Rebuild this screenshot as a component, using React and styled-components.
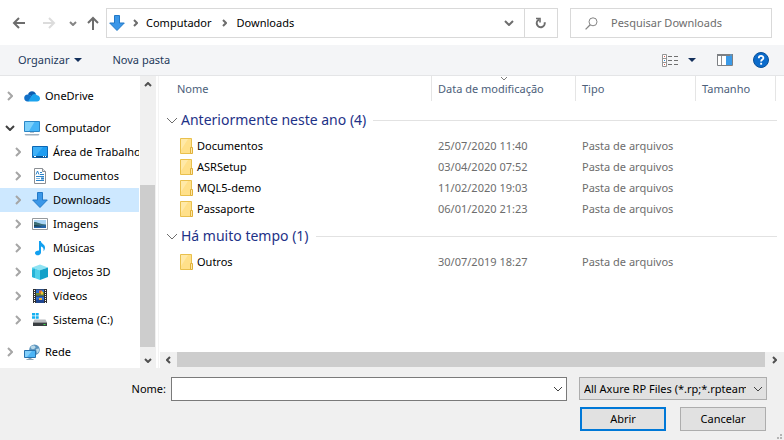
import React from "react";
import styled, { createGlobalStyle, css } from "styled-components";

const GlobalStyle = createGlobalStyle`
  *, *::before, *::after { box-sizing: border-box; }
  body {
    margin: 0;
    background: #fff;
    color: #000;
    font-family: "Noto Sans", "Open Sans", sans-serif;
    font-size: 11px;
    line-height: 16px;
  }
  button, input, select { font: inherit; color: inherit; margin: 0; }
  svg { display: block; flex: none; }
`;

const Dialog = styled.main`
  display: flex;
  flex-direction: column;
  min-height: 100vh;
`;

/* ---------- navigation bar ---------- */

const NavBar = styled.header`
  display: flex;
  align-items: center;
  gap: 12px;
  padding: 8px 12px 7px 11px;
`;

const NavButtons = styled.nav`
  display: flex;
  align-items: center;
  margin-right: -7px;
`;

const IconButton = styled.button`
  display: flex;
  align-items: center;
  justify-content: center;
  flex: none;
  width: ${(p) => p.$width || 16}px;
  height: 16px;
  padding: 0;
  border: 0;
  background: none;
  margin-right: ${(p) => p.$after || 0}px;
`;

const AddressBar = styled.div`
  display: flex;
  align-items: stretch;
  flex: 1;
  min-width: 0;
  height: 30px;
  border: 1px solid #d9d9d9;
`;

const Crumbs = styled.div`
  display: flex;
  align-items: center;
  flex: 1;
  min-width: 0;
  padding-left: 2px;
`;

const Crumb = styled.a`
  color: #000;
  text-decoration: none;
  white-space: nowrap;
`;

const CrumbArrow = styled.span`
  display: flex;
  justify-content: center;
  width: ${(p) => p.$width}px;
`;

const AddressAction = styled.button`
  display: flex;
  align-items: center;
  justify-content: center;
  flex: none;
  width: ${(p) => p.$width}px;
  padding: 0;
  border: 0;
  border-left: ${(p) => (p.$divided ? "1px solid #d9d9d9" : "0")};
  background: none;
`;

const SearchBox = styled.label`
  display: flex;
  align-items: center;
  flex: none;
  width: 202px;
  gap: 13px;
  height: 30px;
  padding: 0 8px 0 14px;
  border: 1px solid #d9d9d9;
`;

const SearchInput = styled.input`
  flex: 1;
  min-width: 0;
  padding: 0;
  border: 0;
  outline: 0;
  background: none;
  &::placeholder { color: #6d6d6d; opacity: 1; }
`;

/* ---------- command bar ---------- */

const CommandBar = styled.div`
  display: flex;
  align-items: center;
  height: 31px;
  padding: 0 15px 0 18px;
  border-bottom: 1px solid #e4e5e7;
  background: #f4f5f7;
`;

const Command = styled.button`
  display: flex;
  align-items: center;
  gap: 5px;
  margin-right: ${(p) => p.$after || 0}px;
  padding: 0;
  border: 0;
  background: none;
  color: #1e395b;
  white-space: nowrap;
`;

const Spacer = styled.div`
  flex: 1;
`;

/* ---------- body ---------- */

const Body = styled.div`
  display: flex;
  flex: 1;
`;

const Sidebar = styled.aside`
  display: flex;
  flex: none;
  width: 159px;
  padding-right: 2px;
  border-right: 1px solid #f3f3f3;
`;

const Tree = styled.ul`
  flex: 1;
  min-width: 0;
  margin: 0;
  padding: 8px 1px 4px 0;
  list-style: none;
`;

const TreeItem = styled.li`
  display: flex;
  align-items: center;
  height: 24px;
  margin-top: ${(p) => (p.$spaced ? 8 : 0)}px;
  padding-left: ${(p) => (p.$nested ? 8 : 0)}px;
  background: ${(p) => (p.$selected ? "#cde8ff" : "transparent")};
  overflow: hidden;
`;

const TreeToggle = styled.button`
  display: flex;
  align-items: center;
  justify-content: center;
  flex: none;
  width: 20px;
  height: 20px;
  margin-right: 4px;
  padding: 0;
  border: 0;
  background: none;
`;

const TreeLabel = styled.a`
  margin-left: 5px;
  color: #000;
  text-decoration: none;
  white-space: nowrap;
`;

const VerticalScroll = styled.div`
  display: flex;
  flex-direction: column;
  align-items: center;
  flex: none;
  width: 16px;
  background: #f0f0f0;
`;

const VerticalTrack = styled.div`
  flex: 1;
  display: flex;
  width: 100%;
  padding: 93px 1px 5px 0;
`;

const HorizontalScroll = styled.div`
  display: flex;
  align-items: center;
  height: 16px;
  padding-bottom: 1px;
  margin-left: 1px;
  background: #f0f0f0;
`;

const Thumb = styled.div`
  flex: 1;
  align-self: stretch;
  background: #cdcdcd;
`;

const Content = styled.section`
  display: flex;
  flex-direction: column;
  justify-content: space-between;
  flex: 1;
  min-width: 0;
`;

const FileTable = styled.table`
  width: 100%;
  table-layout: fixed;
  border-collapse: collapse;
`;

const Column = styled.col`
  width: ${(p) => (p.$width ? `${p.$width}px` : "auto")};
`;

const HeadCell = styled.th`
  height: 28px;
  padding: 0;
  vertical-align: top;
  font-weight: 400;
  text-align: left;
`;

const HeadLabel = styled.div`
  position: relative;
  display: flex;
  align-items: center;
  height: 25px;
  padding-left: ${(p) => (p.$first ? 18 : 6)}px;
  border-left: ${(p) => (p.$first ? "0" : "1px solid #e5e5e5")};
  color: #4c607a;
  white-space: nowrap;
`;

const SortMark = styled.span`
  position: absolute;
  top: 0;
  left: 50%;
  transform: translateX(-50%);
`;

const GroupCell = styled.th`
  height: 32px;
  padding: 0 7px;
  font-weight: 400;
`;

const GroupTitle = styled.div`
  display: flex;
  align-items: center;
  gap: 3px;
  color: #1e3287;
  font-size: 14px;
  line-height: 20px;
  white-space: nowrap;
  &::after {
    content: "";
    flex: 1;
    height: 1px;
    margin-left: 4px;
    background: #e2e2e2;
  }
`;

const Cell = styled.td`
  height: 21px;
  padding: 0 0 2px 7px;
  color: #6d6d6d;
  white-space: nowrap;
`;

const NameCell = styled(Cell)`
  padding-left: 21px;
  color: #000;
`;

const FileName = styled.div`
  display: flex;
  align-items: center;
  gap: 4px;
`;

/* ---------- footer ---------- */

const Footer = styled.form`
  position: relative;
  display: flex;
  flex-direction: column;
  gap: 6px;
  padding: 9px 17px;
  background: #f0f0f0;
`;

const FieldRow = styled.div`
  display: flex;
  align-items: center;
`;

const FieldLabel = styled.label`
  flex: 0 0 154px;
  padding-right: 5px;
  text-align: right;
`;

const ComboBox = styled.div`
  display: flex;
  flex: 1;
  min-width: 0;
  height: 24px;
  margin-right: 12px;
  border: 1px solid #7a7a7a;
  background: #fff;
`;

const NameInput = styled.input`
  flex: 1;
  min-width: 0;
  padding: 0 4px;
  border: 0;
  outline: 0;
  background: none;
`;

const ComboArrow = styled.button`
  display: flex;
  align-items: center;
  justify-content: center;
  width: 17px;
  padding: 0;
  border: 0;
  background: none;
`;

const FilterBox = styled.div`
  display: grid;
  flex: 0 0 188px;
  align-items: center;
  height: 24px;
  padding-bottom: 1px;
  & > * { grid-area: 1 / 1; }
  svg { justify-self: end; margin-right: 4px; pointer-events: none; }
`;

const FilterSelect = styled.select`
  appearance: none;
  width: 100%;
  height: 23px;
  padding: 0 20px 0 4px;
  border: 1px solid #adadad;
  border-radius: 0;
  background: #e1e1e1;
  overflow: hidden;
  text-overflow: clip;
`;

const ButtonRow = styled.div`
  display: flex;
  justify-content: flex-end;
  gap: 14px;
  padding-right: 1px;
`;

const DialogButton = styled.button`
  width: 86px;
  height: 24px;
  padding: 0;
  border: 1px solid #adadad;
  background: #e1e1e1;
  ${(p) =>
    p.$primary &&
    css`
      border: 2px solid #0078d7;
    `}
`;

const ResizeGrip = styled.span`
  position: absolute;
  right: 2px;
  bottom: 1px;
`;

/* ---------- icons ---------- */

const Chevron = ({ dir = "down", w = 8, h = 5, color = "#6d6d6d", stroke = 2 }) => {
  const i = 1;
  const d =
    dir === "down"
      ? `M${i} ${i}L${w / 2} ${h - i}L${w - i} ${i}`
      : dir === "up"
      ? `M${i} ${h - i}L${w / 2} ${i}L${w - i} ${h - i}`
      : dir === "right"
      ? `M${i} ${i}L${w - i} ${h / 2}L${i} ${h - i}`
      : `M${w - i} ${i}L${i} ${h / 2}L${w - i} ${h - i}`;
  return (
    <svg width={w} height={h} viewBox={`0 0 ${w} ${h}`} fill="none" stroke={color} strokeWidth={stroke} aria-hidden="true">
      <path d={d} />
    </svg>
  );
};

const ArrowLine = ({ d, color }) => (
  <svg width="16" height="16" viewBox="0 0 16 16" fill="none" stroke={color} strokeWidth="2" aria-hidden="true">
    <path d={d} />
  </svg>
);

const Triangle = () => (
  <svg width="8" height="4" viewBox="0 0 8 4" aria-hidden="true">
    <path d="M0 0h8L4 4z" fill="#14305c" />
  </svg>
);

const Icon = ({ children, ...rest }) => (
  <svg width="16" height="16" viewBox="0 0 16 16" aria-hidden="true" {...rest}>
    {children}
  </svg>
);

const DownloadIcon = () => (
  <Icon>
    <path d="M5.5.5h5V8h4.8L8 15.5.7 8h4.8z" fill="#3b97e8" stroke="#2379c7" />
  </Icon>
);

const RefreshIcon = () => (
  <svg width="12" height="12" viewBox="0 0 12 12" fill="none" stroke="#6d6d6d" strokeWidth="2" aria-hidden="true">
    <path d="M4 2.6A4 4 0 1 0 9.6 5.2" />
    <path d="M1 1.5h4v4" strokeWidth="1.6" />
  </svg>
);

const SearchIcon = () => (
  <svg width="13" height="13" viewBox="0 0 13 13" fill="none" stroke="#858585" aria-hidden="true">
    <circle cx="8" cy="4.8" r="4" />
    <path d="M5.2 7.8L.6 12.4" strokeWidth="1.3" />
  </svg>
);

const ViewIcon = () => (
  <svg width="16" height="13" viewBox="0 0 16 13" aria-hidden="true">
    <path d="M.5.5h4v12h-4zM.5 4.5h4M.5 8.5h4" fill="#fff" stroke="#959595" />
    <path d="M2 2h1v1H2z" fill="#e05b4b" />
    <path d="M2 6h1v1H2z" fill="#2b8fe0" />
    <path d="M2 10h1v1H2z" fill="#e05b4b" />
    <path d="M6 2.5h4m2 0h4M6 6.5h4m2 0h4M6 10.5h4m2 0h4" stroke="#707070" />
  </svg>
);

const PaneIcon = () => (
  <svg width="16" height="12" viewBox="0 0 16 12" aria-hidden="true">
    <path d="M.5.5h15v11H.5z" fill="#fff" stroke="#7d8084" />
    <path d="M0 0h16v2H0z" fill="#7d8084" />
    <path d="M9 2h6v9H9z" fill="#3a9ae8" />
    <path d="M4.5 2v9" stroke="#8d9094" />
    <path d="M13 1h2" stroke="#4aa6ee" />
  </svg>
);

const HelpIcon = () => (
  <Icon>
    <circle cx="8" cy="8" r="7.5" fill="#0b6bcb" stroke="#0a4f97" />
    <path d="M5.8 6.2c0-3 4.6-2.9 4.6-.3C10.400 7.600 8.100 7.500 8.100 9.600" fill="none" stroke="#fff" strokeWidth="1.8" />
    <path d="M7.200 10.800h1.900v1.900H7.200z" fill="#fff" />
  </Icon>
);

const OneDriveIcon = () => (
  <Icon>
    <path d="M4 6.500C4.500 3.500 9.500 1.500 12 6l-3 3z" fill="#0b5cb0" />
    <path d="M.2 10C0 7.500 2.500 5.800 5 6.700l7 4-8 2.800C2 13.800.2 12.500.2 10z" fill="#1170c8" />
    <path d="M7.500 8c.8-2 4-3 5.500-.7 1.500 0 3 1.300 3 3.200 0 1.800-1.300 3-3 3H4z" fill="#1ba3ee" />
  </Icon>
);

const ComputerIcon = () => (
  <Icon>
    <path d="M.5 1.500h15v10H.5z" fill="#45b4f7" stroke="#2b86c6" />
    <path d="M1 2h9.500L5 11H1z" fill="#7cd0fb" />
    <path d="M6 12h4v1H6z" fill="#b8c4cf" />
    <path d="M.5 14h15l-1 1.500h-13z" fill="#9fb0bf" />
  </Icon>
);

const DesktopIcon = () => (
  <Icon>
    <path d="M.5 2.500h15v11H.5z" fill="#1e9df1" stroke="#0c66b3" />
    <path d="M1 3h10l-7 8.500H1z" fill="#3eb0f7" />
    <path d="M1 12h14v1.500H1z" fill="#0a5290" />
    <path d="M2 12.500h2m7 0h1m1 0h1" stroke="#fff" />
  </Icon>
);

const DocumentIcon = () => (
  <Icon>
    <path d="M2.500.5h8l3 3v12h-11z" fill="#fff" stroke="#8b8f94" />
    <path d="M10.500.5v3h3" fill="#e3e6e9" stroke="#8b8f94" />
    <path d="M4 6.500L5.500 3 7 6.500M8 4.500h2M8 6.500h4M4 8.500h8M4 12.500h8" fill="none" stroke="#2b83c9" />
    <path d="M4 10.500h4" stroke="#7ab6e3" />
    <path d="M9 9.500h3v2H9z" fill="#2b83c9" />
  </Icon>
);

const PictureIcon = () => (
  <Icon>
    <path d="M.5 2.500h15v11H.5z" fill="#fff" stroke="#96999c" />
    <path d="M2 4h12v8H2z" fill="#a9d4f5" />
    <path d="M2 6c4 0 5 2 12 2.500V10H2z" fill="#3d6f76" />
    <path d="M2 9.500h12V12H2z" fill="#2363a8" />
    <path d="M2 9c3 .5 6 .5 8 1.500H2z" fill="#1e3f45" />
  </Icon>
);

const MusicIcon = () => (
  <Icon>
    <path d="M7 1h1.800c.2 2.500 4.700 3.500 4.200 7.200-.2 1.300-.8 2.300-1.500 3 .6-3-.7-4.200-2.500-4.700v6c0 1.600-1.500 2.800-3.300 2.800C4.100 15.300 3 14.400 3 13.100c0-1.500 1.500-2.600 4-2.600z" fill="#12a0f0" />
  </Icon>
);

const CubeIcon = () => (
  <Icon>
    <path d="M0 3.500L8 .5l8 3-8 2.700z" fill="#8fe3f3" />
    <path d="M0 3.500l8 2.700V16l-8-3z" fill="#4fd0ea" />
    <path d="M16 3.500L8 6.200V16l8-3z" fill="#12a1c9" />
    <path d="M0 6l3-1.500V14l-3-1z" fill="#24b2d6" />
  </Icon>
);

const VideoIcon = () => (
  <Icon>
    <path d="M1 1h14v14H1z" fill="#303030" />
    <path d="M4 1.500h8v6H4zM4 8.500h8v6H4z" fill="#2e6fd4" />
    <path d="M4 5h4l4-1v3.500H4z" fill="#6f8d2e" />
    <path d="M7 2.500h3v3H7z" fill="#e8662b" />
    <path d="M9 3.500h2v3H9z" fill="#f0c33c" />
    <path d="M4 12l4-1 4 1.500v2H4z" fill="#1d4593" />
    <path d="M7 10h3v2H7z" fill="#e9b13c" />
    <path d="M2.500 2v13M13.500 2v13" stroke="#fff" strokeDasharray="1 1" />
  </Icon>
);

const DriveIcon = () => (
  <Icon>
    <path d="M0 1h3v2.500H0zM3.700 1h3v2.500h-3zM0 4.200h3v2.500H0zM3.700 4.200h3v2.500h-3z" fill="#12b0f2" />
    <path d="M2.500 7.500h11L15 10.500H1z" fill="#b9bcbf" />
    <path d="M1 10.500h14v3.500H1z" fill="#3b3f42" />
    <path d="M11.500 12h2v1h-2z" fill="#3fe04c" />
  </Icon>
);

const NetworkIcon = () => (
  <Icon>
    <circle cx="10.500" cy="5.700" r="5.300" fill="#5a93bd" />
    <path d="M7 2.500c2-1.800 4-1 4.500.5S9 5.500 8 5 6 3.500 7 2.500zM12 5l3-.5c.5 2-.5 4-2 5z" fill="#b8d8e8" />
    <path d="M.5 6.500h11v7H.5z" fill="#4db4f5" stroke="#2672ae" />
    <path d="M1 7h7l-5 6H1z" fill="#82cffb" />
    <path d="M4.500 14h3v1h2v1h-7v-1h2z" fill="#8ea5b6" />
  </Icon>
);

const FolderIcon = () => (
  <svg width="13" height="16" viewBox="0 0 13 16" aria-hidden="true">
    <path d="M.5.5h11v15H.5z" fill="#ffe08a" stroke="#e9c04d" />
    <path d="M1 1h7L1 12z" fill="#ffe9a8" />
    <path d="M10.500 9.500h2v6h-2z" fill="#ffe9a8" stroke="#e0b13a" />
  </svg>
);

const GripIcon = () => (
  <svg width="5" height="5" viewBox="0 0 5 5" fill="#b5b5b5" aria-hidden="true">
    <path d="M3 0h2v2H3zM0 3h2v2H0zM3 3h2v2H3z" />
  </svg>
);

/* ---------- data ---------- */

const places = [
  { label: "OneDrive", icon: OneDriveIcon },
  { label: "Computador", icon: ComputerIcon, open: true, spaced: true },
  { label: "Área de Trabalho", icon: DesktopIcon, nested: true },
  { label: "Documentos", icon: DocumentIcon, nested: true },
  { label: "Downloads", icon: DownloadIcon, nested: true, selected: true },
  { label: "Imagens", icon: PictureIcon, nested: true },
  { label: "Músicas", icon: MusicIcon, nested: true },
  { label: "Objetos 3D", icon: CubeIcon, nested: true },
  { label: "Vídeos", icon: VideoIcon, nested: true },
  { label: "Sistema (C:)", icon: DriveIcon, nested: true },
  { label: "Rede", icon: NetworkIcon, spaced: true },
];

const groups = [
  {
    title: "Anteriormente neste ano (4)",
    files: [
      ["Documentos", "25/07/2020 11:40"],
      ["ASRSetup", "03/04/2020 07:52"],
      ["MQL5-demo", "11/02/2020 19:03"],
      ["Passaporte", "06/01/2020 21:23"],
    ],
  },
  { title: "Há muito tempo (1)", files: [["Outros", "30/07/2019 18:27"]] },
];

/* ---------- page ---------- */

function Navigation() {
  return (
    <NavBar>
      <NavButtons aria-label="Navegação">
        <IconButton aria-label="Voltar" $after={14}>
          <ArrowLine color="#6d6d6d" d="M14 8H3M8 3L3 8l5 5" />
        </IconButton>
        <IconButton aria-label="Avançar" $after={8}>
          <ArrowLine color="#dcdcdc" d="M2 8h11M8 3l5 5-5 5" />
        </IconButton>
        <IconButton aria-label="Locais recentes" $after={4}>
          <Chevron color="#858585" />
        </IconButton>
        <IconButton aria-label="Acima">
          <ArrowLine color="#6d6d6d" d="M8 15V3M3 8l5-5 5 5" />
        </IconButton>
      </NavButtons>
      <AddressBar>
        <Crumbs>
          <DownloadIcon />
          <CrumbArrow $width={21}>
            <Chevron dir="right" w={5} h={8} />
          </CrumbArrow>
          <Crumb href="#computador">Computador</Crumb>
          <CrumbArrow $width={25}>
            <Chevron dir="right" w={5} h={8} />
          </CrumbArrow>
          <Crumb href="#downloads">Downloads</Crumb>
        </Crumbs>
        <AddressAction $width={30} aria-label="Locais anteriores">
          <Chevron w={10} h={6} />
        </AddressAction>
        <AddressAction $width={33} $divided aria-label="Atualizar">
          <RefreshIcon />
        </AddressAction>
      </AddressBar>
      <SearchBox>
        <SearchIcon />
        <SearchInput type="text" placeholder="Pesquisar Downloads" aria-label="Pesquisar Downloads" />
      </SearchBox>
    </NavBar>
  );
}

function Commands() {
  return (
    <CommandBar>
      <Command $after={30}>
        Organizar
        <Triangle />
      </Command>
      <Command>Nova pasta</Command>
      <Spacer />
      <IconButton aria-label="Modo de exibição" $after={8}>
        <ViewIcon />
      </IconButton>
      <IconButton aria-label="Mais opções" $width={11} $after={20}>
        <Triangle />
      </IconButton>
      <IconButton aria-label="Painel de visualização" $after={20}>
        <PaneIcon />
      </IconButton>
      <IconButton aria-label="Ajuda">
        <HelpIcon />
      </IconButton>
    </CommandBar>
  );
}

function Places() {
  return (
    <Sidebar>
      <Tree>
        {places.map(({ label, icon: PlaceIcon, open, spaced, nested, selected }) => (
          <TreeItem key={label} $spaced={spaced} $nested={nested} $selected={selected}>
            <TreeToggle aria-label={`Expandir ${label}`} aria-expanded={!!open}>
              {open ? (
                <Chevron w={10} h={6} color="#404040" />
              ) : (
                <Chevron dir="right" w={6} h={10} color="#a6a6a6" />
              )}
            </TreeToggle>
            <PlaceIcon />
            <TreeLabel href={`#${label}`}>{label}</TreeLabel>
          </TreeItem>
        ))}
      </Tree>
      <VerticalScroll>
        <IconButton aria-label="Rolar para cima">
          <Chevron dir="up" color="#505050" />
        </IconButton>
        <VerticalTrack>
          <Thumb />
        </VerticalTrack>
        <IconButton aria-label="Rolar para baixo">
          <Chevron color="#505050" />
        </IconButton>
      </VerticalScroll>
    </Sidebar>
  );
}

function Files() {
  return (
    <Content>
      <FileTable>
        <colgroup>
          <Column />
          <Column $width={144} />
          <Column $width={120} />
          <Column $width={80} />
          <Column $width={9} />
        </colgroup>
        <thead>
          <tr>
            <HeadCell scope="col">
              <HeadLabel $first>Nome</HeadLabel>
            </HeadCell>
            <HeadCell scope="col">
              <HeadLabel>
                Data de modificação
                <SortMark>
                  <Chevron stroke={1} color="#7d7d7d" />
                </SortMark>
              </HeadLabel>
            </HeadCell>
            <HeadCell scope="col">
              <HeadLabel>Tipo</HeadLabel>
            </HeadCell>
            <HeadCell scope="col">
              <HeadLabel>Tamanho</HeadLabel>
            </HeadCell>
            <HeadCell as="td">
              <HeadLabel />
            </HeadCell>
          </tr>
        </thead>
        {groups.map((group) => (
          <tbody key={group.title}>
            <tr>
              <GroupCell colSpan={5} scope="rowgroup">
                <GroupTitle>
                  <Chevron w={12} h={7} stroke={1} />
                  {group.title}
                </GroupTitle>
              </GroupCell>
            </tr>
            {group.files.map(([name, date]) => (
              <tr key={name}>
                <NameCell>
                  <FileName>
                    <FolderIcon />
                    {name}
                  </FileName>
                </NameCell>
                <Cell>{date}</Cell>
                <Cell>Pasta de arquivos</Cell>
                <Cell />
                <Cell />
              </tr>
            ))}
          </tbody>
        ))}
      </FileTable>
      <HorizontalScroll>
        <IconButton aria-label="Rolar para a esquerda" $width={17}>
          <Chevron dir="left" w={5} h={8} color="#505050" />
        </IconButton>
        <Thumb />
        <IconButton aria-label="Rolar para a direita" $width={19}>
          <Chevron dir="right" w={5} h={8} color="#505050" />
        </IconButton>
      </HorizontalScroll>
    </Content>
  );
}

export default function App() {
  return (
    <Dialog>
      <GlobalStyle />
      <Navigation />
      <Commands />
      <Body>
        <Places />
        <Files />
      </Body>
      <Footer onSubmit={(e) => e.preventDefault()}>
        <FieldRow>
          <FieldLabel htmlFor="file-name">Nome:</FieldLabel>
          <ComboBox>
            <NameInput id="file-name" type="text" />
            <ComboArrow type="button" aria-label="Nomes recentes">
              <Chevron w={10} h={6} stroke={1} color="#404040" />
            </ComboArrow>
          </ComboBox>
          <FilterBox>
            <FilterSelect aria-label="Tipo de arquivo">
              <option>All Axure RP Files (*.rp;*.rpteam</option>
            </FilterSelect>
            <Chevron w={10} h={6} stroke={1} color="#404040" />
          </FilterBox>
        </FieldRow>
        <ButtonRow>
          <DialogButton type="submit" $primary>
            Abrir
          </DialogButton>
          <DialogButton type="button">Cancelar</DialogButton>
        </ButtonRow>
        <ResizeGrip>
          <GripIcon />
        </ResizeGrip>
      </Footer>
    </Dialog>
  );
}
